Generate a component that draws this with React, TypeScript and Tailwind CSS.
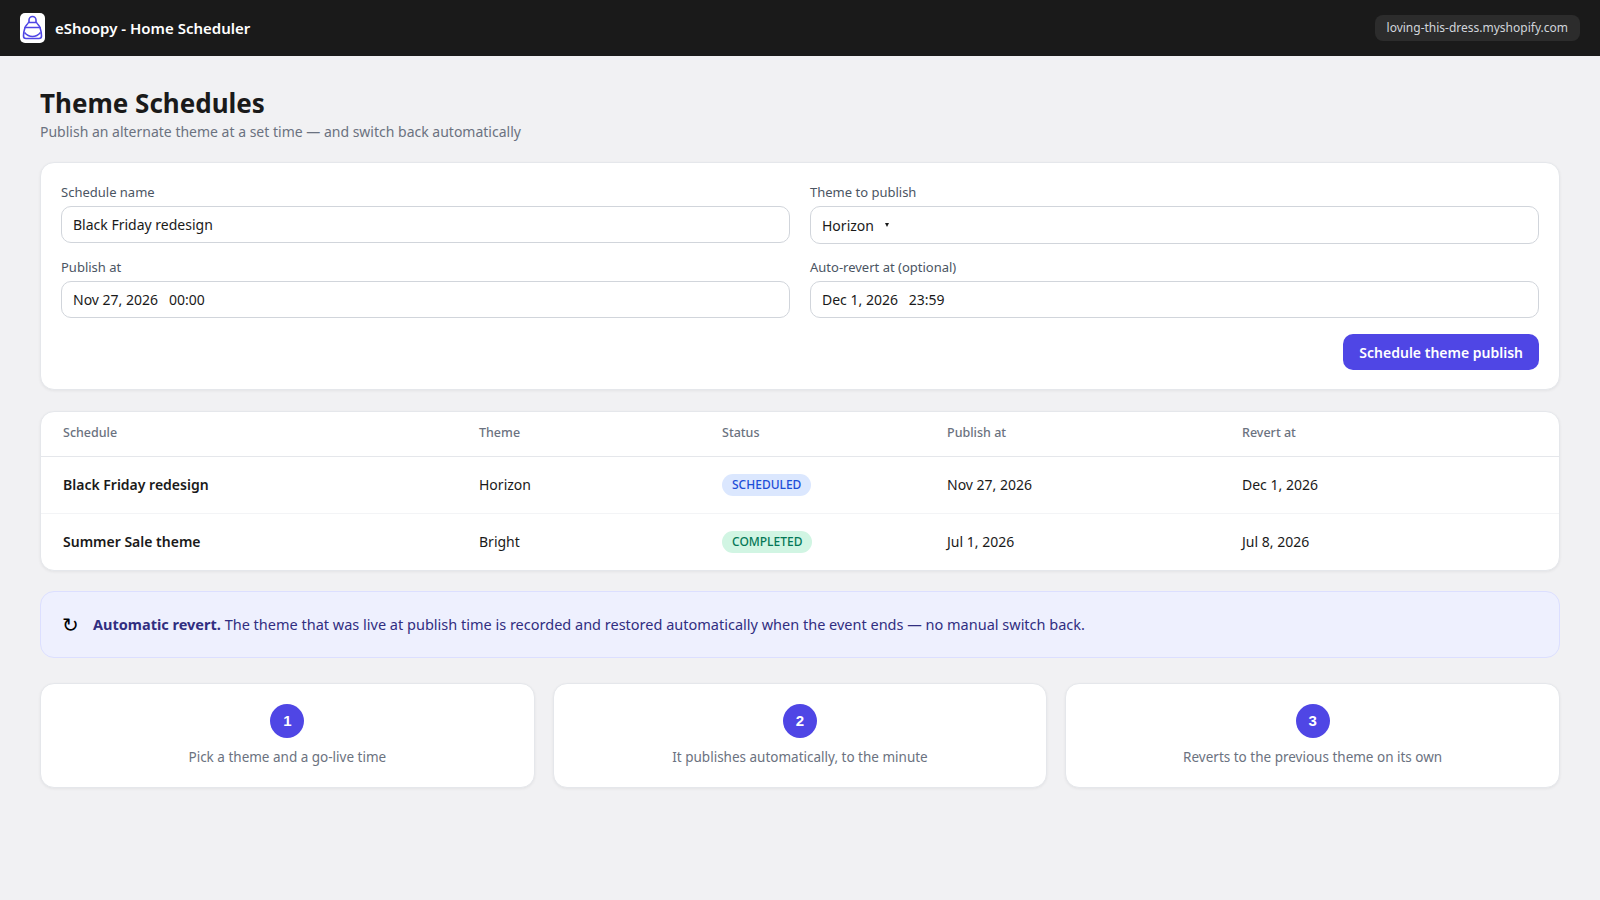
const FONT = "font-['Noto_Sans','Open_Sans',sans-serif]";

function Logo() {
  return (
    <div className="flex h-[30px] w-[25px] items-center justify-center rounded-[5px] bg-white">
      <svg width="21" height="26" viewBox="0 0 21 26" fill="none" stroke="#4f46e5" strokeWidth="1.6">
        <path d="M7 7.5V5a3.5 3.5 0 0 1 7 0v2.5" />
        <path d="M6.5 7.5h8c1 2 3 3 3.5 5H3c.5-2 2.5-3 3.5-5Z" />
        <path d="M3 12.5c-1 3-1.5 6-1.5 8.5 0 1.500 1 2.500 2.500 2.500h13c1.500 0 2.500-1 2.500-2.500 0-2.500-.5-5.500-1.500-8.500" />
        <path d="M2.500 17.500c2.500 3 5 4 8 4s5.500-1 8-4" />
      </svg>
    </div>
  );
}

function Field({ label, children, tall }: { label: string; children: React.ReactNode; tall?: boolean }) {
  return (
    <div className="flex flex-col">
      <div className="mb-[5px] text-[13px] leading-[18px] text-[#4b5563]">{label}</div>
      <div className={`flex items-center rounded-[10px] border border-[#d1d5db] bg-white px-[11px] text-[14px] text-[#1a1a1a] ${tall ? "h-[38px]" : "h-[37px]"}`}>
        {children}
      </div>
    </div>
  );
}

function Th({ children, w }: { children: React.ReactNode; w: string }) {
  return <th className={`${w} h-[44px] border-b border-[#e5e7eb] pl-[22px] text-left text-[12.5px] font-medium text-[#6b7280]`}>{children}</th>;
}

function Row({ name, theme, status, statusCls, pub, rev, last }: { name: string; theme: string; status: string; statusCls: string; pub: string; rev: string; last?: boolean }) {
  const td = `h-[57px] pl-[22px] text-[14px] text-[#1a1a1a] ${last ? "" : "border-b border-[#f3f4f6]"}`;
  return (
    <tr>
      <td className={`${td} font-semibold`}>{name}</td>
      <td className={td}>{theme}</td>
      <td className={td}>
        <span className={`inline-block rounded-full px-[10px] text-[12px] font-medium leading-[22px] ${statusCls}`}>{status}</span>
      </td>
      <td className={td}>{pub}</td>
      <td className={td}>{rev}</td>
    </tr>
  );
}

function Step({ n, text }: { n: number; text: string }) {
  return (
    <div className="flex h-[105px] flex-col items-center rounded-[14px] border border-[#e5e7eb] bg-white pt-[20px] shadow-[0_1px_3px_rgba(0,0,0,0.06)]">
      <div className="flex h-[34px] w-[34px] items-center justify-center rounded-full bg-[#4f46e5] font-['Liberation_Sans',sans-serif] text-[15px] font-bold text-white">{n}</div>
      <div className="mt-[9px] text-[13.5px] leading-[20px] text-[#6b7280]">{text}</div>
    </div>
  );
}

export default function App() {
  return (
    <div className={`${FONT} min-h-[900px] bg-[#f1f1f3]`}>
      <header className="flex h-[56px] items-center justify-between bg-[#1a1a1a] pl-[20px] pr-[20px]">
        <div className="flex items-center gap-[10px]">
          <Logo />
          <span className="text-[15px] font-semibold text-white">eShoopy - Home Scheduler</span>
        </div>
        <span className="rounded-[8px] bg-[#2c2c2c] px-[12px] py-[4px] text-[12px] leading-[18px] text-[#d1d5db]">loving-this-dress.myshopify.com</span>
      </header>

      <main className="px-[40px] pt-[32px]">
        <h1 className="text-[26px] font-bold leading-[30px] text-[#1a1a1a]">Theme Schedules</h1>
        <p className="mt-[4px] text-[14px] leading-[20px] text-[#6b7280]">Publish an alternate theme at a set time — and switch back automatically</p>

        <section className="mt-[20px] rounded-[14px] border border-[#e5e7eb] bg-white px-[20px] pb-[19px] pt-[20px] shadow-[0_1px_3px_rgba(0,0,0,0.06)]">
          <div className="grid grid-cols-2 gap-x-[20px] gap-y-[14px]">
            <Field label="Schedule name"><span>Black Friday redesign</span></Field>
            <Field label="Theme to publish" tall>
              <span>Horizon</span>
              <span className="ml-[11px] h-0 w-0 border-x-[2.500px] border-t-[4px] border-x-transparent border-t-[#1a1a1a]" />
            </Field>
            <Field label="Publish at"><span className="whitespace-pre">Nov 27, 2026   00:00</span></Field>
            <Field label="Auto-revert at (optional)"><span className="whitespace-pre">Dec 1, 2026   23:59</span></Field>
          </div>
          <div className="mt-[16px] flex justify-end">
            <button className="h-[36px] rounded-[10px] bg-[#4f46e5] px-[16px] text-[14px] font-semibold text-white">Schedule theme publish</button>
          </div>
        </section>

        <section className="mt-[21px] overflow-hidden rounded-[14px] border border-[#e5e7eb] bg-white shadow-[0_1px_3px_rgba(0,0,0,0.06)]">
          <table className="w-full table-fixed border-collapse">
            <thead>
              <tr>
                <Th w="w-[416px]">Schedule</Th>
                <Th w="w-[243px]">Theme</Th>
                <Th w="w-[225px]">Status</Th>
                <Th w="w-[295px]">Publish at</Th>
                <Th w="w-auto">Revert at</Th>
              </tr>
            </thead>
            <tbody>
              <Row name="Black Friday redesign" theme="Horizon" status="SCHEDULED" statusCls="bg-[#dbe7fe] text-[#1d4ed8]" pub="Nov 27, 2026" rev="Dec 1, 2026" />
              <Row name="Summer Sale theme" theme="Bright" status="COMPLETED" statusCls="bg-[#d1f5e3] text-[#047857]" pub="Jul 1, 2026" rev="Jul 8, 2026" last />
            </tbody>
          </table>
        </section>

        <section className="mt-[20px] flex h-[67px] items-center rounded-[14px] border border-[#dcdfff] bg-[#eef0fe] pl-[21px] text-[14.500px] text-[#312e81]">
          <span className="w-[31px] font-['DejaVu_Sans',sans-serif] text-[20px] leading-none text-black">↻</span>
          <span><strong className="font-bold">Automatic revert.</strong> The theme that was live at publish time is recorded and restored automatically when the event ends — no manual switch back.</span>
        </section>

        <section className="mt-[25px] grid grid-cols-3 gap-[18px]">
          <Step n={1} text="Pick a theme and a go-live time" />
          <Step n={2} text="It publishes automatically, to the minute" />
          <Step n={3} text="Reverts to the previous theme on its own" />
        </section>
      </main>
    </div>
  );
}
